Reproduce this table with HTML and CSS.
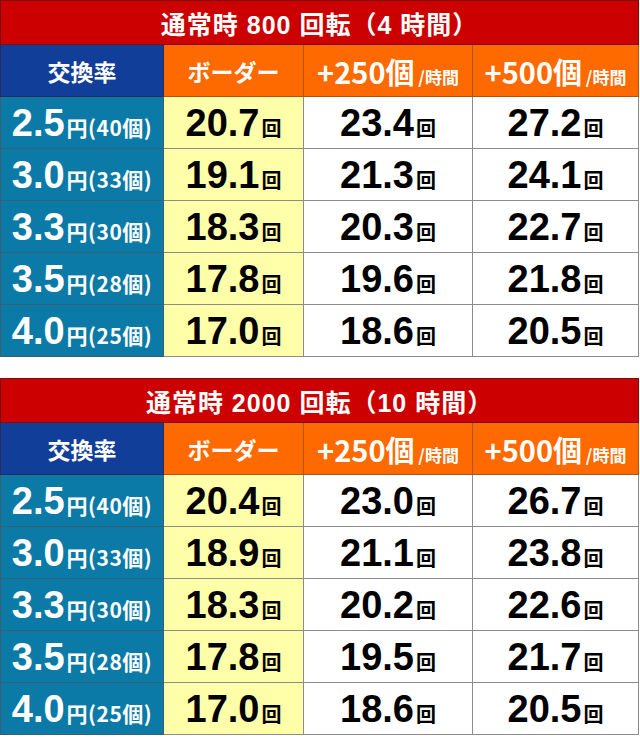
FILE: index.html
```html
<!DOCTYPE html>
<html lang="ja">
<head>
<meta charset="utf-8">
<title>ボーダー表</title>
<link rel="stylesheet" href="styles.css">
</head>
<body>
<div class="page">
  <table class="border-table">
    <colgroup><col class="c1"><col class="c2"><col class="c3"><col class="c4"></colgroup>
    <tr><th class="title" colspan="4">通常時 800 回転（4 時間）</th></tr>
    <tr class="head">
      <th class="h-rate">交換率</th>
      <th class="h-orange">ボーダー</th>
      <th class="h-orange"><span class="big">+250個</span><span class="small"> /時間</span></th>
      <th class="h-orange"><span class="big">+500個</span><span class="small"> /時間</span></th>
    </tr>
    <tr><td class="rate"><span class="num">2.5</span><span class="unit">円(40個)</span></td><td class="bd"><span class="num">20.7</span><span class="kai">回</span></td><td><span class="num">23.4</span><span class="kai">回</span></td><td><span class="num">27.2</span><span class="kai">回</span></td></tr>
    <tr><td class="rate"><span class="num">3.0</span><span class="unit">円(33個)</span></td><td class="bd"><span class="num">19.1</span><span class="kai">回</span></td><td><span class="num">21.3</span><span class="kai">回</span></td><td><span class="num">24.1</span><span class="kai">回</span></td></tr>
    <tr><td class="rate"><span class="num">3.3</span><span class="unit">円(30個)</span></td><td class="bd"><span class="num">18.3</span><span class="kai">回</span></td><td><span class="num">20.3</span><span class="kai">回</span></td><td><span class="num">22.7</span><span class="kai">回</span></td></tr>
    <tr><td class="rate"><span class="num">3.5</span><span class="unit">円(28個)</span></td><td class="bd"><span class="num">17.8</span><span class="kai">回</span></td><td><span class="num">19.6</span><span class="kai">回</span></td><td><span class="num">21.8</span><span class="kai">回</span></td></tr>
    <tr><td class="rate"><span class="num">4.0</span><span class="unit">円(25個)</span></td><td class="bd"><span class="num">17.0</span><span class="kai">回</span></td><td><span class="num">18.6</span><span class="kai">回</span></td><td><span class="num">20.5</span><span class="kai">回</span></td></tr>
  </table>

  <table class="border-table">
    <colgroup><col class="c1"><col class="c2"><col class="c3"><col class="c4"></colgroup>
    <tr><th class="title" colspan="4">通常時 2000 回転（10 時間）</th></tr>
    <tr class="head">
      <th class="h-rate">交換率</th>
      <th class="h-orange">ボーダー</th>
      <th class="h-orange"><span class="big">+250個</span><span class="small"> /時間</span></th>
      <th class="h-orange"><span class="big">+500個</span><span class="small"> /時間</span></th>
    </tr>
    <tr><td class="rate"><span class="num">2.5</span><span class="unit">円(40個)</span></td><td class="bd"><span class="num">20.4</span><span class="kai">回</span></td><td><span class="num">23.0</span><span class="kai">回</span></td><td><span class="num">26.7</span><span class="kai">回</span></td></tr>
    <tr><td class="rate"><span class="num">3.0</span><span class="unit">円(33個)</span></td><td class="bd"><span class="num">18.9</span><span class="kai">回</span></td><td><span class="num">21.1</span><span class="kai">回</span></td><td><span class="num">23.8</span><span class="kai">回</span></td></tr>
    <tr><td class="rate"><span class="num">3.3</span><span class="unit">円(30個)</span></td><td class="bd"><span class="num">18.3</span><span class="kai">回</span></td><td><span class="num">20.2</span><span class="kai">回</span></td><td><span class="num">22.6</span><span class="kai">回</span></td></tr>
    <tr><td class="rate"><span class="num">3.5</span><span class="unit">円(28個)</span></td><td class="bd"><span class="num">17.8</span><span class="kai">回</span></td><td><span class="num">19.5</span><span class="kai">回</span></td><td><span class="num">21.7</span><span class="kai">回</span></td></tr>
    <tr><td class="rate"><span class="num">4.0</span><span class="unit">円(25個)</span></td><td class="bd"><span class="num">17.0</span><span class="kai">回</span></td><td><span class="num">18.6</span><span class="kai">回</span></td><td><span class="num">20.5</span><span class="kai">回</span></td></tr>
  </table>
</div>
</body>
</html>
```
FILE: styles.css
```css
html, body {
  margin: 0;
  padding: 0;
  background: #ffffff;
}
.page {
  width: 638px;
  display: flex;
  flex-direction: column;
  gap: 21px;
  font-family: "Liberation Sans", "Noto Sans CJK JP", sans-serif;
  font-weight: bold;
}
.border-table {
  width: 638px;
  border-collapse: collapse;
  table-layout: fixed;
}
.c1 { width: 163px; }
.c2 { width: 140px; }
.c3 { width: 169px; }
.c4 { width: 166px; }
.border-table th,
.border-table td {
  border: 1px solid #8c8c8c;
  padding: 0;
  text-align: center;
  vertical-align: middle;
  white-space: nowrap;
  font-weight: bold;
}
.title {
  height: 43px;
  background: #cc0000;
  color: #ffffff;
  font-family: "Liberation Sans", "Noto Sans CJK JP", sans-serif;
  font-size: 25px;
  letter-spacing: 1px;
  border-color: #7a1010 !important;
}
.head th {
  height: 51px;
  color: #ffffff;
  font-family: "Noto Sans CJK JP", sans-serif;
  font-size: 23px;
}
.h-rate {
  background: #113e99;
  border-color: #2a2a55 !important;
}
.h-orange {
  background: #ff6a00;
  border-color: #a8561c !important;
}
.h-orange .big {
  font-size: 29px;
}
.h-orange .small {
  font-size: 17px;
}
.border-table td {
  height: 51px;
  background: #ffffff;
  color: #000000;
}
.border-table td.rate {
  background: #0b7aa6;
  color: #ffffff;
  border-color: #3b5f70;
}
.border-table td.bd {
  background: #ffffaa;
}
.num {
  font-family: "Liberation Sans", sans-serif;
  font-size: 38px;
  line-height: 1;
}
.unit {
  font-family: "Noto Sans CJK JP", sans-serif;
  font-size: 21px;
  letter-spacing: 0.5px;
  margin-left: 2px;
}
.kai {
  font-family: "Noto Sans CJK JP", sans-serif;
  font-size: 20px;
  margin-left: 2px;
}
```
